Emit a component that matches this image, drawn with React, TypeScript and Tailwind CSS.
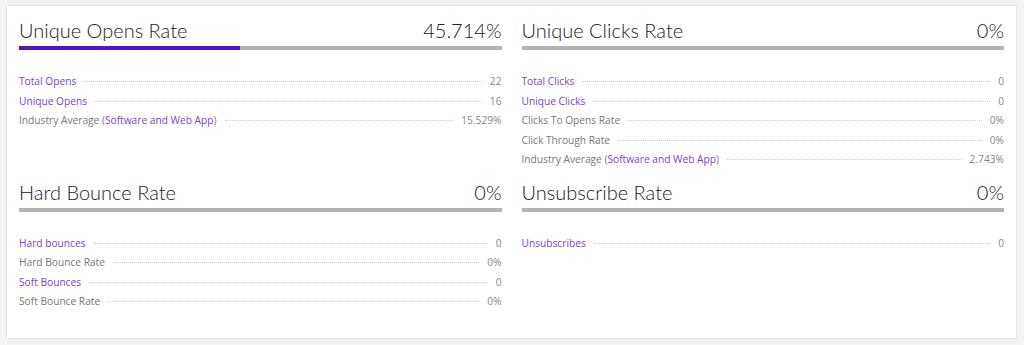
import React from "react";

type Row = { label: React.ReactNode; value: string; link?: boolean };

const purple = "text-[#7a3fd1]";

function Section({ title, value, pct, rows }: { title: string; value: string; pct: number; rows: Row[] }) {
  return (
    <div>
      <div className="flex items-center justify-between h-6">
        <div className="text-[20px] text-[#222] font-['Lato',sans-serif] font-light leading-6">{title}</div>
        <div className="text-[20px] text-[#222] font-['Lato',sans-serif] font-light leading-6">{value}</div>
      </div>
      <div className="mt-1 h-1 bg-[#b3b3b3] flex">
        <div className="h-1 bg-[#5b10c9]" style={{ width: `${pct}%` }} />
      </div>
      <div className="mt-[22px]">
        {rows.map((r, i) => (
          <div key={i} className="flex items-baseline h-[19.5px] leading-[19.5px] text-[10.2px] font-['Open_Sans',sans-serif]">
            <span className={r.link ? purple : "text-[#777]"}>{r.label}</span>
            <span className="flex-1 mx-2 border-b border-dotted border-[#cfcfcf] translate-y-[-3px]" />
            <span className="text-[#888]">{r.value}</span>
          </div>
        ))}
      </div>
    </div>
  );
}

export default function App() {
  const ind = (
    <>
      Industry Average (<span className={purple}>Software and Web App</span>)
    </>
  );
  return (
    <div className="w-[1024px] h-[345px] bg-[#f3f3f3] pt-[6px] pl-[7px] pr-2">
      <div className="w-[1009px] h-[332px] bg-white shadow-[0_0_2px_rgba(0,0,0,0.15)] px-3 pt-3">
        <div className="grid grid-cols-2 gap-x-5 gap-y-[10px]">
          <Section
            title="Unique Opens Rate"
            value="45.714%"
            pct={45.714}
            rows={[
              { label: "Total Opens", value: "22", link: true },
              { label: "Unique Opens", value: "16", link: true },
              { label: ind, value: "15.529%" },
            ]}
          />
          <Section
            title="Unique Clicks Rate"
            value="0%"
            pct={0}
            rows={[
              { label: "Total Clicks", value: "0", link: true },
              { label: "Unique Clicks", value: "0", link: true },
              { label: "Clicks To Opens Rate", value: "0%" },
              { label: "Click Through Rate", value: "0%" },
              { label: ind, value: "2.743%" },
            ]}
          />
          <Section
            title="Hard Bounce Rate"
            value="0%"
            pct={0}
            rows={[
              { label: "Hard bounces", value: "0", link: true },
              { label: "Hard Bounce Rate", value: "0%" },
              { label: "Soft Bounces", value: "0", link: true },
              { label: "Soft Bounce Rate", value: "0%" },
            ]}
          />
          <Section
            title="Unsubscribe Rate"
            value="0%"
            pct={0}
            rows={[{ label: "Unsubscribes", value: "0", link: true }]}
          />
        </div>
      </div>
    </div>
  );
}
